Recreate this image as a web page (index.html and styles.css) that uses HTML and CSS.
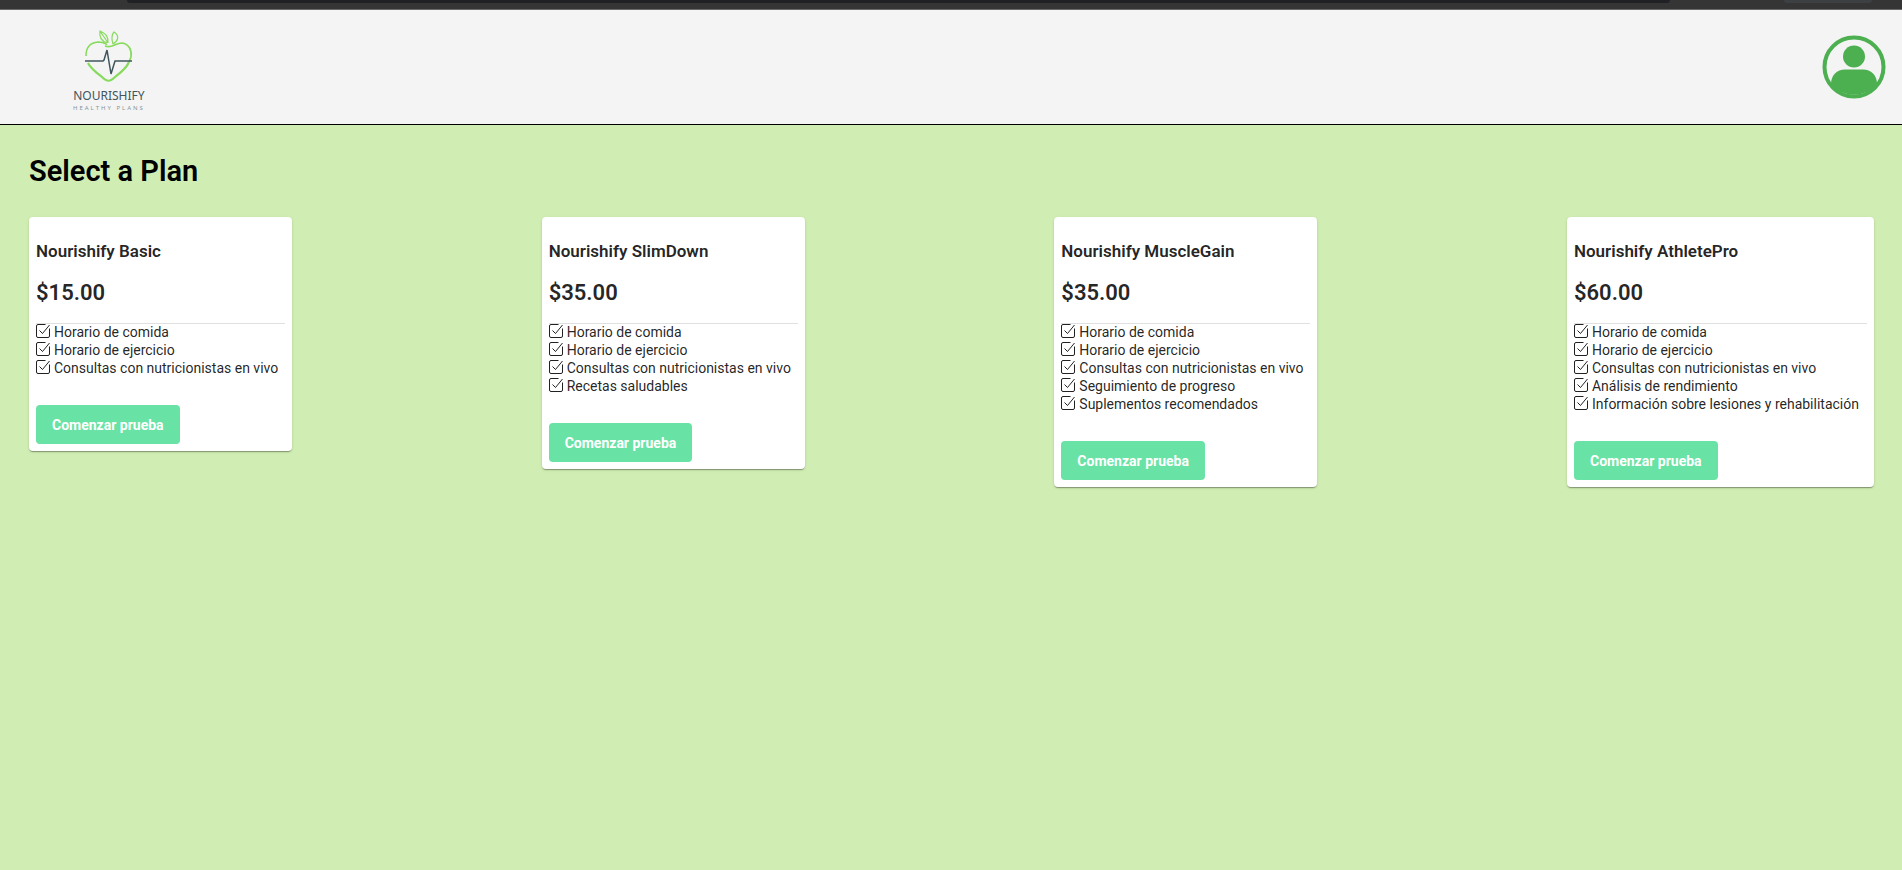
FILE: index.html
```html
<!DOCTYPE html>
<html lang="es">
<head>
<meta charset="utf-8">
<title>Nourishify</title>
<link rel="stylesheet" href="styles.css">
</head>
<body>
<svg class="defs" width="0" height="0" aria-hidden="true">
  <symbol id="check" viewBox="0 0 14 14">
    <path d="M9.500 .5H2A1.500 1.500 0 0 0 .5 2v10A1.500 1.500 0 0 0 2 13.500h10a1.500 1.500 0 0 0 1.500-1.500V4.500M3.500 6.500l3 3 7-8.500" fill="none" stroke="currentColor" stroke-width="1"/>
  </symbol>
</svg>
<div class="browser-edge"><span class="address"></span><span class="pill"></span></div>
<header class="header">
  <a class="logo" href="#" aria-label="Nourishify Healthy Plans">
    <svg class="logo-mark" viewBox="0 0 48 54" aria-hidden="true">
      <g fill="none" stroke="#86db5c">
        <path d="M1 26C1 17 6 12.500 13 12c4 0 7 1 9 3" stroke-width="1.500"/>
        <path d="M20 16c7 3 10-3 17-3 7 1 10 7 9 14l-2 5" stroke-width="1.700"/>
        <path d="M3 33c3 6 9 10 14 14 5 5 8 5 13 0 5-4 11-8 14-15" stroke-width="2.200"/>
        <path d="M22 13c-6-2-8-6-7-12 7 3 8 6 8 12M15 1l8 12M28 14c-2-5-1-10 1-12 6 4 4 9-1 12" stroke-width="1.200"/>
      </g>
      <path d="M0 31h18l1-1 3-10 4 24 4-13h17" fill="none" stroke="#40555c" stroke-width="1.500"/>
    </svg>
    <span class="logo-name">NOURISHIFY</span>
    <span class="logo-tag">HEALTHY PLANS</span>
  </a>
  <button class="avatar" type="button" aria-label="Perfil">
    <svg viewBox="0 0 64 64" aria-hidden="true">
      <circle cx="32" cy="32" r="29.500" fill="none" stroke="#4caf50" stroke-width="4"/>
      <circle cx="32" cy="21.500" r="11" fill="#4caf50"/>
      <path d="M9 49C9 40 15 34.500 23 34.500h18c8 0 14 5.500 14 14.500A30 30 0 0 1 9 49z" fill="#4caf50"/>
    </svg>
  </button>
</header>
<main class="plans">
  <h1 class="heading">Select a Plan</h1>
  <div class="cards">
    <section class="card">
      <h2 class="name">Nourishify Basic</h2>
      <p class="price">$15.00</p>
      <ul class="features">
        <li><svg class="check"><use href="#check"/></svg>Horario de comida</li>
        <li><svg class="check"><use href="#check"/></svg>Horario de ejercicio</li>
        <li><svg class="check"><use href="#check"/></svg>Consultas con nutricionistas en vivo</li>
      </ul>
      <button class="start" type="button">Comenzar prueba</button>
    </section>
    <section class="card">
      <h2 class="name">Nourishify SlimDown</h2>
      <p class="price">$35.00</p>
      <ul class="features">
        <li><svg class="check"><use href="#check"/></svg>Horario de comida</li>
        <li><svg class="check"><use href="#check"/></svg>Horario de ejercicio</li>
        <li><svg class="check"><use href="#check"/></svg>Consultas con nutricionistas en vivo</li>
        <li><svg class="check"><use href="#check"/></svg>Recetas saludables</li>
      </ul>
      <button class="start" type="button">Comenzar prueba</button>
    </section>
    <section class="card">
      <h2 class="name">Nourishify MuscleGain</h2>
      <p class="price">$35.00</p>
      <ul class="features">
        <li><svg class="check"><use href="#check"/></svg>Horario de comida</li>
        <li><svg class="check"><use href="#check"/></svg>Horario de ejercicio</li>
        <li><svg class="check"><use href="#check"/></svg>Consultas con nutricionistas en vivo</li>
        <li><svg class="check"><use href="#check"/></svg>Seguimiento de progreso</li>
        <li><svg class="check"><use href="#check"/></svg>Suplementos recomendados</li>
      </ul>
      <button class="start" type="button">Comenzar prueba</button>
    </section>
    <section class="card card-wide">
      <h2 class="name">Nourishify AthletePro</h2>
      <p class="price">$60.00</p>
      <ul class="features">
        <li><svg class="check"><use href="#check"/></svg>Horario de comida</li>
        <li><svg class="check"><use href="#check"/></svg>Horario de ejercicio</li>
        <li><svg class="check"><use href="#check"/></svg>Consultas con nutricionistas en vivo</li>
        <li><svg class="check"><use href="#check"/></svg>Análisis de rendimiento</li>
        <li><svg class="check"><use href="#check"/></svg>Información sobre lesiones y rehabilitación</li>
      </ul>
      <button class="start" type="button">Comenzar prueba</button>
    </section>
  </div>
</main>
</body>
</html>
```
FILE: styles.css
```css
* { box-sizing: border-box; }

body {
  margin: 0;
  min-height: 100vh;
  background: #d0eeb3;
  color: rgba(0, 0, 0, .87);
  font-family: Roboto, "Liberation Sans", sans-serif;
  font-size: 14px;
}

.defs { position: absolute; }

.browser-edge {
  display: flex;
  gap: 114px;
  height: 10px;
  padding: 0 30px 0 127px;
  background: #353535;
  border-bottom: 1px solid #696969;
}
.address {
  flex: 1;
  height: 3px;
  background: #202124;
  border-radius: 0 0 8px 8px;
}
.pill {
  width: 88px;
  height: 3px;
  background: #3c4043;
  border-radius: 0 0 8px 8px;
}

.header {
  display: flex;
  justify-content: space-between;
  align-items: center;
  height: 115px;
  padding: 0 16px 0 73px;
  background: #f4f4f4;
  border-bottom: 1px solid #000;
}
.logo {
  display: flex;
  flex-direction: column;
  align-items: center;
  padding-top: 8px;
  color: #40555c;
  font-family: "Noto Sans", sans-serif;
  text-decoration: none;
}
.logo-mark { width: 48px; height: 54px; }
.logo-name { margin-top: 4px; font-size: 12px; line-height: 16px; }
.logo-tag {
  font-size: 6px;
  line-height: 8px;
  letter-spacing: 2px;
  color: #87949a;
}
.avatar {
  width: 64px;
  height: 64px;
  padding: 0;
  border: 0;
  background: none;
}
.avatar svg { display: block; }

.plans { padding: 28px 28px 28px 29px; }
.heading {
  margin: 0 0 28px;
  color: #000;
  font-size: 29px;
  font-weight: 600;
  line-height: 36px;
}
.cards {
  display: flex;
  justify-content: space-between;
  align-items: flex-start;
}
.card {
  min-width: 263px;
  padding: 7px;
  background: #fff;
  border-radius: 4px;
  box-shadow: 0 2px 1px -1px rgba(0, 0, 0, .2), 0 1px 1px rgba(0, 0, 0, .14), 0 1px 3px rgba(0, 0, 0, .12);
}
.card-wide { min-width: 307px; }
.name {
  margin: 15px 0 16px;
  font-size: 17px;
  font-weight: 600;
  line-height: 24px;
}
.price {
  margin: 0 0 16px;
  font-size: 22px;
  font-weight: 600;
  line-height: 28px;
}
.features {
  margin: 0 0 27px;
  padding: 0;
  border-top: 1px solid #e0e0e0;
  list-style: none;
  line-height: 16px;
}
.features li {
  display: flex;
  gap: 4px;
  padding-bottom: 2px;
}
.check { width: 14px; height: 14px; }
.start {
  display: block;
  height: 39px;
  padding: 0 16px;
  border: 0;
  border-radius: 4px;
  background: #69e2a5;
  color: #fff;
  font: 700 14px Roboto, sans-serif;
}
```
